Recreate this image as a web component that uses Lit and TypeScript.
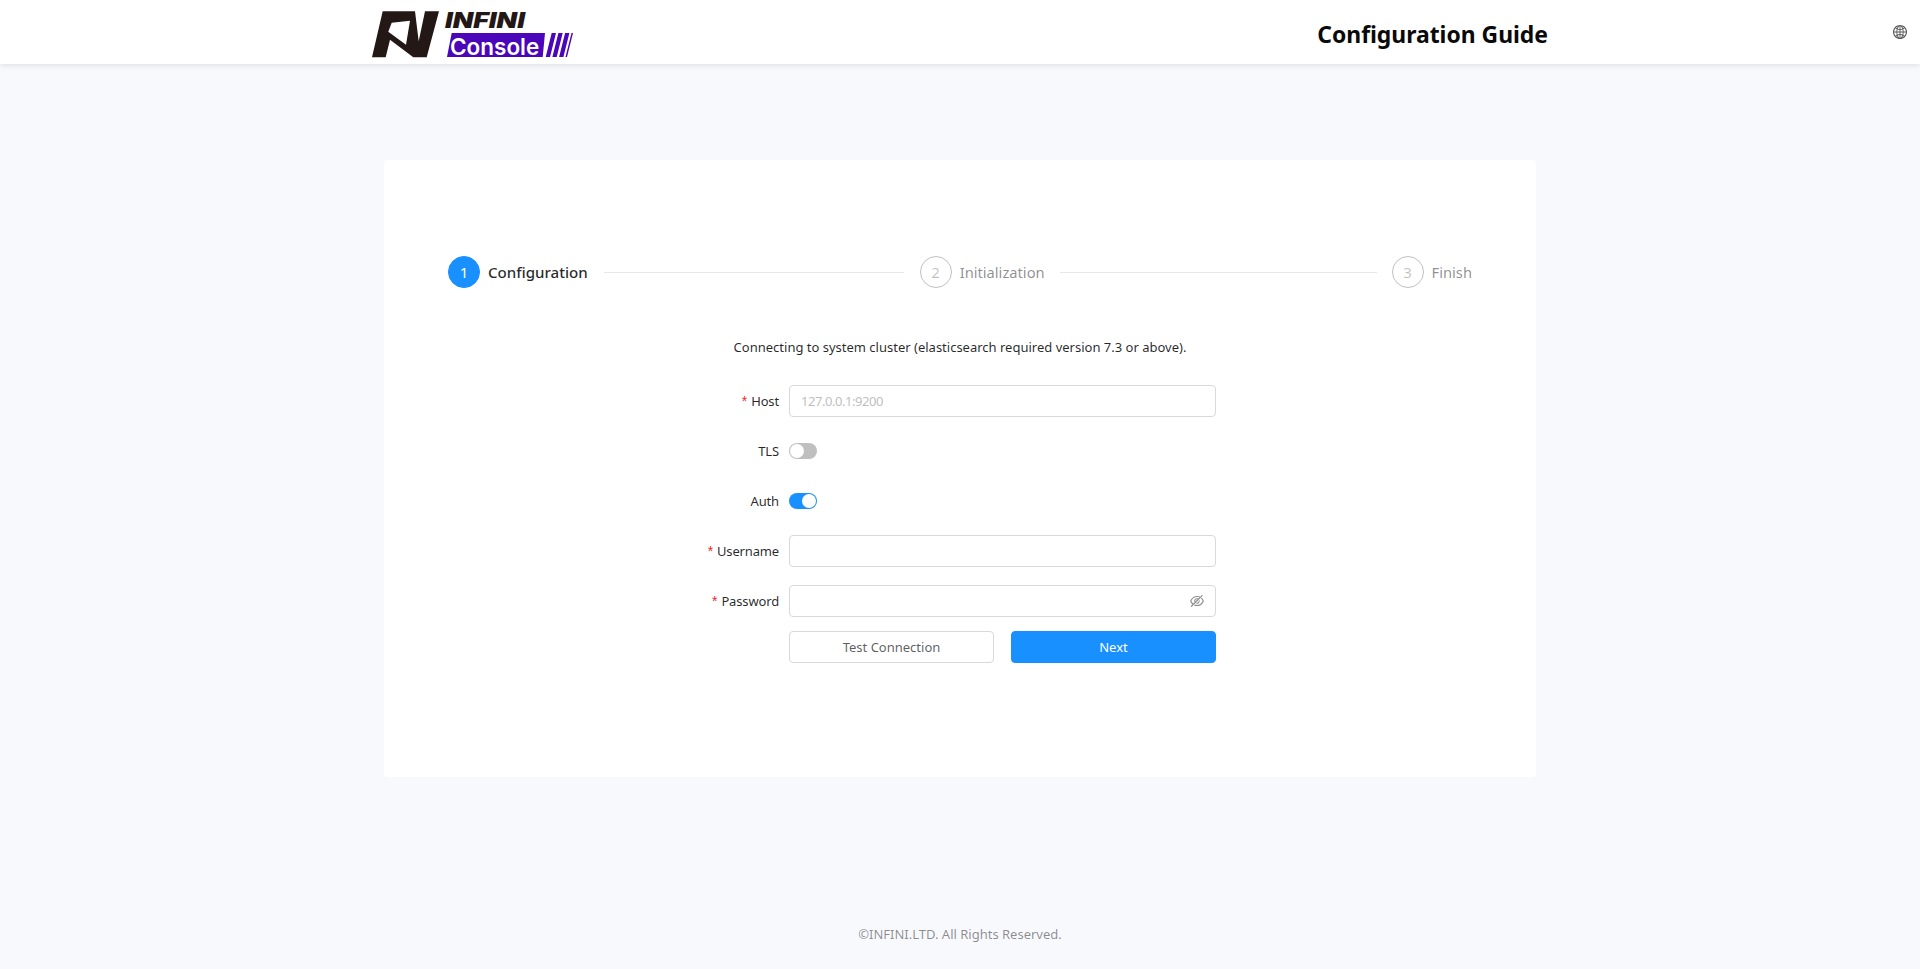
import { LitElement, html, css } from "lit";
import { customElement } from "lit/decorators.js";

const eyeOff = html`<svg class="eye" viewBox="64 64 896 896" fill="currentColor"><path d="M942.2 486.2Q889.47 375.11 816.7 305l-50.88 50.88C807.31 395.53 843.45 447.4 874.7 512 791.5 684.2 673.4 766 512 766q-72.67 0-133.87-22.38L323 798.75Q408 838 512 838q288.3 0 430.2-300.3a60.29 60.29 0 0 0 0-51.5zm-63.57-320.64L836 122.88a8 8 0 0 0-11.32 0L715.31 232.2Q624.86 186 512 186q-288.3 0-430.2 300.3a60.3 60.3 0 0 0 0 51.5q56.69 119.4 136.5 191.41L112.48 835a8 8 0 0 0 0 11.31L155.17 889a8 8 0 0 0 11.31 0l712.15-712.12a8 8 0 0 0 0-11.32zM149.3 512C232.6 339.8 350.7 258 512 258c54.54 0 104.13 9.36 149.12 28.39l-70.3 70.3a176 176 0 0 0-238.13 238.13l-83.42 83.42C223.1 637.49 183.3 582.28 149.3 512zm246.7 0a112.11 112.11 0 0 1 146.2-106.69L401.31 546.2A112 112 0 0 1 396 512z"/><path d="M508 624c-3.46 0-6.87-.16-10.25-.47l-52.82 52.82a176.09 176.09 0 0 0 227.42-227.42l-52.82 52.82c.31 3.38.47 6.79.47 10.25a111.94 111.94 0 0 1-112 112z"/></svg>`;

const globe = html`<svg class="globe" viewBox="64 64 896 896" fill="currentColor"><path d="M854.4 800.9c.2-.3.5-.6.7-.9C920.6 722.1 960 621.7 960 512s-39.4-210.1-104.8-288c-.2-.3-.5-.5-.7-.8-1.1-1.3-2.1-2.5-3.2-3.7-.4-.5-.8-.9-1.2-1.4l-4.1-4.7-.1-.1c-1.5-1.7-3.1-3.4-4.6-5.1l-.1-.1c-3.2-3.4-6.4-6.8-9.7-10.1l-.1-.1-4.8-4.8-.3-.3c-1.5-1.5-3-2.9-4.5-4.3-.5-.5-1-1-1.6-1.5-1-1-2-1.9-3-2.8-.3-.3-.7-.6-1-1C736.4 109.2 629.5 64 512 64s-224.4 45.2-304.3 119.2c-.3.3-.7.6-1 1-1 .9-2 1.9-3 2.9-.5.5-1 1-1.6 1.5-1.5 1.4-3 2.9-4.5 4.3l-.3.3-4.8 4.8-.1.1c-3.3 3.3-6.5 6.7-9.7 10.1l-.1.1c-1.6 1.7-3.1 3.4-4.6 5.1l-.1.1c-1.4 1.5-2.8 3.1-4.1 4.7-.4.5-.8.9-1.2 1.4-1.1 1.2-2.1 2.5-3.2 3.7-.2.3-.5.5-.7.8C103.4 301.9 64 402.3 64 512s39.4 210.1 104.8 288c.2.3.5.6.7.9l3.1 3.7c.4.5.8.9 1.2 1.4l4.1 4.7c0 .1.1.1.1.2 1.5 1.7 3 3.4 4.6 5l.1.1c3.2 3.4 6.4 6.8 9.6 10.1l.1.1c1.6 1.6 3.1 3.2 4.7 4.7l.3.3c3.3 3.3 6.7 6.5 10.1 9.6 80.1 74 187 119.2 304.5 119.2s224.4-45.2 304.3-119.2a300 300 0 0 0 10-9.6l.3-.3c1.6-1.6 3.2-3.1 4.7-4.7l.1-.1c3.3-3.3 6.5-6.7 9.6-10.1l.1-.1c1.5-1.7 3.1-3.3 4.6-5 0-.1.1-.1.1-.2 1.4-1.5 2.8-3.1 4.1-4.7.4-.5.8-.9 1.2-1.4a99 99 0 0 0 3.3-3.7zm4.1-142.6c-13.8 32.6-32 62.8-54.2 90.2a444.07 444.07 0 0 0-81.5-55.9c11.6-46.9 18.8-98.4 20.7-152.6H887c-3 40.9-12.6 80.6-28.5 118.3zM887 484H743.5c-1.9-54.2-9.1-105.7-20.7-152.6 29.3-15.6 56.6-34.4 81.5-55.9A373.86 373.86 0 0 1 887 484zM658.3 165.5c39.7 16.8 75.8 40 107.6 69.2a394.72 394.72 0 0 1-59.4 41.8c-15.7-45-35.8-84.1-59.2-115.4 3.7 1.4 7.4 2.9 11 4.4zm-90.6 700.6c-9.2 7.2-18.4 12.7-27.7 16.4V697a389.1 389.1 0 0 1 115.7 26.2c-8.3 24.6-17.9 47.3-29 67.8-17.4 32.4-37.8 58.3-59 75.1zm59-633.1c11 20.6 20.7 43.3 29 67.8A389.1 389.1 0 0 1 540 327V141.6c9.2 3.7 18.5 9.1 27.7 16.4 21.2 16.7 41.6 42.6 59 75zM540 640.9V540h147.5c-1.6 44.2-7.1 87.1-16.3 127.8l-.3 1.2A445.02 445.02 0 0 0 540 640.9zm0-156.9V383.1a445.02 445.02 0 0 0 130.9-28.1l.3 1.2c9.2 40.7 14.7 83.5 16.3 127.8H540zm-56 56v100.9c-45.8 2.8-89.8 12.5-130.9 28.1l-.3-1.2c-9.2-40.7-14.7-83.5-16.3-127.8H484zm-147.5-56c1.6-44.2 7.1-87.1 16.3-127.8l.3-1.2c41.1 15.6 85 25.3 130.9 28.1V484H336.5zM484 697v185.4c-9.2-3.7-18.5-9.1-27.7-16.4-21.2-16.7-41.7-42.7-59.1-75.1-11-20.6-20.7-43.3-29-67.8 37.2-14.6 75.9-23.3 115.8-26.1zm0-370a389.1 389.1 0 0 1-115.7-26.2c8.3-24.6 17.9-47.3 29-67.8 17.4-32.4 37.8-58.4 59-75.1 9.2-7.2 18.4-12.7 27.7-16.4V327zM365.7 165.5c3.7-1.5 7.3-3 11-4.4-23.4 31.3-43.5 70.4-59.2 115.4-21-12-40.9-26-59.4-41.8 31.8-29.2 67.9-52.4 107.6-69.2zM165.5 365.7c13.8-32.6 32-62.8 54.2-90.2 24.9 21.5 52.2 40.3 81.5 55.9-11.6 46.9-18.8 98.4-20.7 152.6H137c3-40.9 12.6-80.6 28.5-118.3zM137 540h143.5c1.9 54.2 9.1 105.7 20.7 152.6a444.07 444.07 0 0 0-81.5 55.9A373.86 373.86 0 0 1 137 540zm228.7 318.5c-39.7-16.8-75.8-40-107.6-69.2 18.5-15.8 38.4-29.7 59.4-41.8 15.7 45 35.8 84.1 59.2 115.4-3.7-1.4-7.4-2.9-11-4.4zm292.6 0c-3.7 1.5-7.3 3-11 4.4 23.4-31.3 43.5-70.4 59.2-115.4 21 12 40.9 26 59.4 41.8a373.81 373.81 0 0 1-107.6 69.2z"/></svg>`;

/* logo on a canvas whose (0,0) is (372,10) on the page */
const logo = html`<svg class="logo" viewBox="0 -6 202 56" width="202" height="56">
  <path fill="#231815" fill-rule="evenodd" d="M0 47.300 L10.700 1.300 L43 1.300 L46.700 31.300 L53 1.300 L67 1.300 L54.700 47.300 L41.300 47.300 L18 29.700 L13.700 47.300 Z M19.700 12.700 L38 10.700 L34 34.700 L16.300 21.700 Z"/>
  <path fill="#4a06b8" d="M79.700 23 L173 23 L170.700 47 L75 47 Z"/>
  <path fill="#4a06b8" d="M179.700 23 L184 23 L178 47 L173.700 47 Z M186.400 23 L190.700 23 L184.700 47 L180.400 47 Z M193.100 23 L197.400 23 L191.400 47 L187.100 47 Z M199.500 23 L201 23 L195 47 L193.500 47 Z"/>
  <text class="infini" transform="translate(73 18) scale(1.27 1)">INFINI</text>
  <text class="console" x="78" y="44.500">Console</text>
</svg>`;

@customElement("app-root")
export class AppRoot extends LitElement {
  static styles = css`
    :host {
      display: block;
      min-height: 969px;
      background: #f8f9fd;
      font-family: "Noto Sans", "Open Sans", sans-serif;
      font-size: 13px;
      color: rgba(0, 0, 0, 0.85);
    }
    .header {
      height: 64px;
      background: #fff;
      box-shadow: 0 1px 6px rgba(0, 21, 41, 0.12);
      display: flex;
      align-items: center;
      position: relative;
      padding-left: 372px;
      padding-right: 13px;
      box-sizing: border-box;
    }
    .logo { display: block; }
    .logo text { font-family: "Inter", "Liberation Sans", sans-serif; }
    .infini { font-size: 21px; font-weight: 900; font-style: italic; fill: #231815; }
    .console { font-size: 22.5px; font-weight: 600; fill: #fff; }
    .title {
      margin-left: auto;
      margin-right: 345px;
      margin-top: 4px;
      font-size: 22.9px;
      font-weight: 700;
      color: #0a0a0a;
    }
    .globe { width: 14px; height: 14px; color: rgba(0, 0, 0, 0.65); display: block; }
    .card {
      width: 1152px;
      height: 617px;
      margin: 96px auto 0;
      background: #fff;
      border-radius: 4px;
      box-sizing: border-box;
      padding: 96px 64px 0;
    }
    .steps { display: flex; align-items: center; height: 32px; }
    .circle {
      width: 32px;
      height: 32px;
      box-sizing: border-box;
      border-radius: 50%;
      border: 1px solid rgba(0, 0, 0, 0.25);
      color: rgba(0, 0, 0, 0.25);
      display: flex;
      align-items: center;
      justify-content: center;
      font-size: 15px;
      flex: none;
    }
    .circle.on { background: #1890ff; border-color: #1890ff; color: #fff; }
    .slabel { font-size: 14.7px; color: rgba(0, 0, 0, 0.45); margin-left: 8px; white-space: nowrap; }
    .slabel.on { color: rgba(0, 0, 0, 0.85); font-weight: 500; font-size: 15.1px; }
    .line { height: 1px; background: #e8e8e8; margin: 0 16px; flex: 245 1 0; }
    .line.long { flex: 259 1 0; margin-right: 15px; margin-left: 15px; }
    .desc { margin-top: 48px; text-align: center; line-height: 22px; color: rgba(0, 0, 0, 0.85); }
    .form {
      margin-top: 23px;
      display: grid;
      grid-template-columns: 331px 427px;
      column-gap: 10px;
      grid-auto-rows: 40px;
      row-gap: 10px;
      align-items: center;
    }
    .label { text-align: right; white-space: nowrap; letter-spacing: -0.15px; }
    .req { color: #f5222d; margin-right: 4px; font-family: "Liberation Sans", sans-serif; font-size: 14px; }
    .input {
      height: 32px;
      box-sizing: border-box;
      border: 1px solid #d9d9d9;
      border-radius: 4px;
      padding: 0 11px;
      display: flex;
      align-items: center;
      justify-content: space-between;
      color: #bfbfbf;
      letter-spacing: -0.45px;
    }
    .eye { width: 14px; height: 14px; color: rgba(0, 0, 0, 0.45); }
    .switch {
      width: 28px;
      height: 16px;
      border-radius: 8px;
      background: #bfbfbf;
      position: relative;
    }
    .switch::after {
      content: "";
      position: absolute;
      left: 1px;
      top: 1px;
      width: 14px;
      height: 14px;
      border-radius: 50%;
      background: #fff;
    }
    .switch.on { background: #1890ff; }
    .switch.on::after { left: 13px; }
    .actions {
      grid-column: 2;
      display: grid;
      grid-template-columns: 205px 205px;
      column-gap: 17px;
      align-self: start;
    }
    .btn {
      height: 32px;
      box-sizing: border-box;
      border-radius: 4px;
      border: 1px solid #d9d9d9;
      display: flex;
      align-items: center;
      justify-content: center;
      color: rgba(0, 0, 0, 0.65);
      background: #fff;
    }
    .btn.primary { background: #1890ff; border-color: #1890ff; color: #fff; }
    .footer {
      margin-top: 146px;
      text-align: center;
      line-height: 22px;
      color: rgba(0, 0, 0, 0.45);
    }
  `;

  render() {
    return html`
      <div class="header">
        ${logo}
        <div class="title">Configuration Guide</div>
        ${globe}
      </div>
      <div class="card">
        <div class="steps">
          <div class="circle on">1</div><div class="slabel on">Configuration</div><div class="line"></div>
          <div class="circle">2</div><div class="slabel">Initialization</div><div class="line long"></div>
          <div class="circle">3</div><div class="slabel">Finish</div>
        </div>
        <div class="desc">Connecting to system cluster (elasticsearch required version 7.3 or above).</div>
        <div class="form">
          <div class="label"><span class="req">*</span>Host</div>
          <div class="input">127.0.0.1:9200</div>
          <div class="label">TLS</div>
          <div><div class="switch"></div></div>
          <div class="label">Auth</div>
          <div><div class="switch on"></div></div>
          <div class="label"><span class="req">*</span>Username</div>
          <div class="input"></div>
          <div class="label"><span class="req">*</span>Password</div>
          <div class="input"><span></span>${eyeOff}</div>
          <div class="actions">
            <div class="btn">Test Connection</div>
            <div class="btn primary">Next</div>
          </div>
        </div>
      </div>
      <div class="footer">©INFINI.LTD. All Rights Reserved.</div>
    `;
  }
}
